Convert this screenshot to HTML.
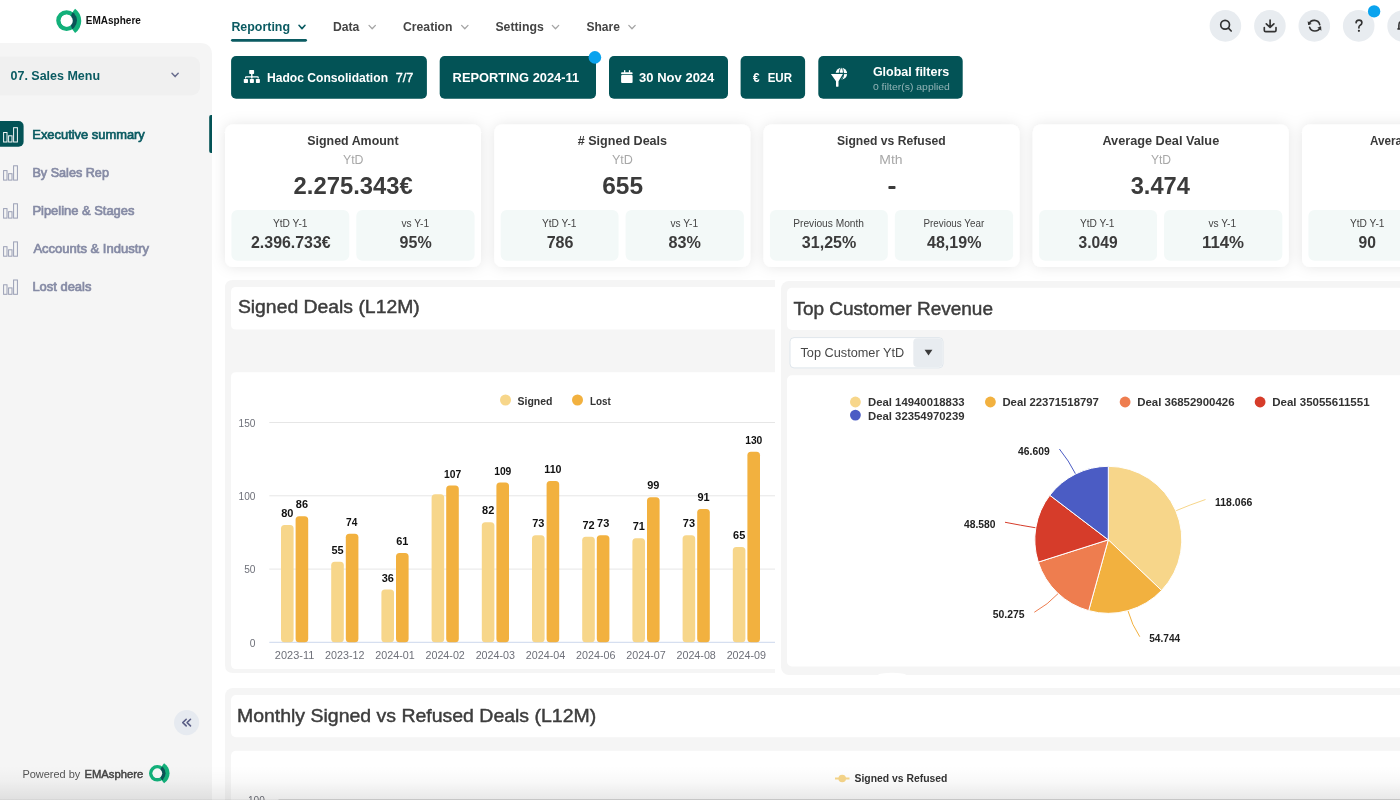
<!DOCTYPE html>
<html><head><meta charset="utf-8"><style>
html,body{margin:0;padding:0;background:#fff;overflow:hidden;width:1400px;height:800px}
svg{display:block;font-family:"Liberation Sans",sans-serif;will-change:transform}
</style></head><body>
<svg width="1400" height="800" viewBox="0 0 1400 800">
<defs>
  <filter id="sh" x="-20%" y="-40%" width="140%" height="180%" filterUnits="objectBoundingBox">
    <feDropShadow dx="0" dy="0" stdDeviation="7" flood-color="#000" flood-opacity="0.1"/>
  </filter>
  <linearGradient id="btm" x1="0" y1="0" x2="0" y2="1">
    <stop offset="0" stop-color="#000" stop-opacity="0"/>
    <stop offset="0.45" stop-color="#000" stop-opacity="0.025"/>
    <stop offset="1" stop-color="#000" stop-opacity="0.09"/>
  </linearGradient>
  <clipPath id="ringclip"><circle cx="66.6" cy="20.6" r="10.4"/></clipPath>
  <clipPath id="ringclip2"><circle cx="157.3" cy="773.3" r="8.3"/></clipPath>
</defs>
<!-- sidebar -->
<path d="M0,43 H200 Q212,43 212,55 V800 H0 Z" fill="#f5f5f5"/>
<rect x="-10" y="56.8" width="210" height="38.4" rx="8" fill="#f0f0f0"/>
<!-- logo top -->
<g>
  <circle cx="66.6" cy="20.6" r="8.2" fill="none" stroke="#12b07a" stroke-width="4.4"/>
  <path d="M75.1,8.8 A15,15 0 0 1 75.1,33 A17.7,17.7 0 0 1 75.1,8.8 Z" fill="#12b07a"/>
  <path d="M75.1,8.8 A15,15 0 0 1 75.1,33 A17.7,17.7 0 0 1 75.1,8.8 Z" fill="#0b5557" clip-path="url(#ringclip)"/>
  <circle cx="66.8" cy="20.8" r="6" fill="#fff"/>
</g>
<!-- logo bottom -->
<g>
  <circle cx="157.3" cy="773.3" r="6.55" fill="none" stroke="#12b07a" stroke-width="3.5"/>
  <path d="M164.1,763.2 A12,12 0 0 1 164.1,783.3 A14.5,14.5 0 0 1 164.1,763.2 Z" fill="#12b07a"/>
  <path d="M164.1,763.2 A12,12 0 0 1 164.1,783.3 A14.5,14.5 0 0 1 164.1,763.2 Z" fill="#0b5557" clip-path="url(#ringclip2)"/>
  <circle cx="157.4" cy="773.3" r="4.8" fill="#f7f7f7"/>
</g>
<!-- sales menu chevron -->
<path d="M172,73.2 L175.1,76.6 L178.2,73.2" fill="none" stroke="#6b6f8f" stroke-width="1.5" stroke-linecap="round" stroke-linejoin="round"/>
<!-- active item -->
<rect x="-6" y="121.1" width="29.6" height="25.6" rx="5" fill="#035356"/>
<path d="M212,115 V153 H211 Q209.2,153 209.2,151 V117 Q209.2,115 211,115 Z" fill="#035356"/>
<g fill="none" stroke="#fff" stroke-width="1" opacity="0.95">
  <rect x="3.6" y="132.5" width="3.4" height="9.5"/>
  <rect x="8.6" y="135.8" width="3.4" height="6.2"/>
  <rect x="13.6" y="127.7" width="3.8" height="14.3"/>
</g>
<g fill="none" stroke="#9a9fb5" stroke-width="1">
  <rect x="3.6" y="170.6" width="3.4" height="9.5"/>
  <rect x="8.6" y="173.7" width="3.4" height="6.4"/>
  <rect x="13.6" y="165.8" width="3.8" height="14.3"/>
  <rect x="3.6" y="208.6" width="3.4" height="9.5"/>
  <rect x="8.6" y="211.7" width="3.4" height="6.4"/>
  <rect x="13.6" y="203.8" width="3.8" height="14.3"/>
  <rect x="3.6" y="246.7" width="3.4" height="9.5"/>
  <rect x="8.6" y="249.8" width="3.4" height="6.4"/>
  <rect x="13.6" y="241.9" width="3.8" height="14.3"/>
  <rect x="3.6" y="284.8" width="3.4" height="9.5"/>
  <rect x="8.6" y="287.9" width="3.4" height="6.4"/>
  <rect x="13.6" y="280" width="3.8" height="14.3"/>
</g>
<!-- collapse -->
<circle cx="186.6" cy="722.6" r="12.6" fill="#e6eaf0"/>
<path d="M186.2,719.3 L182.8,722.6 L186.2,725.9 M190.5,719.3 L187.1,722.6 L190.5,725.9" fill="none" stroke="#5b5f86" stroke-width="1.6" stroke-linecap="round" stroke-linejoin="round"/>

<!-- top nav -->
<rect x="231" y="38.9" width="76" height="2.9" rx="1.45" fill="#0b5b62"/>
<path d="M299,25.3 L302,28.6 L305,25.3" fill="none" stroke="#0b5b62" stroke-width="1.6" stroke-linecap="round" stroke-linejoin="round"/>
<g fill="none" stroke="#a5a5a5" stroke-width="1.3" stroke-linecap="round" stroke-linejoin="round">
<path d="M369,25.4 L372.2,28.8 L375.4,25.4"/>
<path d="M461.6,25.4 L464.8,28.8 L468,25.4"/>
<path d="M552.3,25.4 L555.5,28.8 L558.7,25.4"/>
<path d="M628.8,25.4 L632,28.8 L635.2,25.4"/>
</g>

<!-- buttons -->
<g fill="#035356">
<rect x="231.1" y="56.1" width="195.8" height="42.6" rx="5"/>
<rect x="439.7" y="56.1" width="156.3" height="42.6" rx="5"/>
<rect x="609" y="56.1" width="119" height="42.6" rx="5"/>
<rect x="740.6" y="56.1" width="64.5" height="42.6" rx="5"/>
<rect x="818.3" y="56.1" width="144.4" height="42.6" rx="5"/>
</g>
<circle cx="594.9" cy="57.4" r="6.3" fill="#0aa3ee"/>
<!-- sitemap icon -->
<g fill="#fff">
<rect x="249.2" y="70.1" width="4.9" height="3.9" rx="0.7"/>
<rect x="251.1" y="73.5" width="1.4" height="3.5"/>
<path d="M245,78.4 V77.5 Q245,76.2 246.3,76.2 H257.5 Q258.8,76.2 258.8,77.5 V78.4 H257.6 V77.6 H246.2 V78.4 Z"/>
<rect x="251.1" y="76.5" width="1.4" height="2"/>
<rect x="243.8" y="78.9" width="4.2" height="4.1" rx="0.7"/>
<rect x="249.9" y="78.9" width="4" height="4.1" rx="0.7"/>
<rect x="255.9" y="78.9" width="4" height="4.1" rx="0.7"/>
</g>
<!-- calendar icon -->
<g fill="#fff">
<rect x="621.1" y="72.2" width="11.5" height="2" rx="0.8"/>
<rect x="621.1" y="75.1" width="11.5" height="7.9" rx="1"/>
<rect x="624" y="70.2" width="1.3" height="2.5"/>
<rect x="628.9" y="70.2" width="1.3" height="2.5"/>
</g>
<!-- funnel globe -->
<g>
<circle cx="841.4" cy="73.6" r="5.8" fill="#fff"/>
<ellipse cx="841.4" cy="73.6" rx="2.1" ry="5.8" fill="none" stroke="#035356" stroke-width="0.9"/>
<line x1="835" y1="73.6" x2="848" y2="73.6" stroke="#035356" stroke-width="1"/>
<path d="M830.9,74.1 H842.9 L838.5,81.2 V86.7 H836 V81.2 Z" fill="#035356" stroke="#035356" stroke-width="2.6" stroke-linejoin="round"/>
<path d="M830.9,74.1 H842.9 L838.5,81.2 V86.3 Q838.5,86.7 838.1,86.7 H836.4 Q836,86.7 836,86.3 V81.2 Z" fill="#fff"/>
</g>

<!-- right icons -->
<g fill="#e8ecf0">
<circle cx="1225.4" cy="25.9" r="15.8"/>
<circle cx="1269.9" cy="25.9" r="15.8"/>
<circle cx="1314.3" cy="25.9" r="15.8"/>
<circle cx="1358.7" cy="25.9" r="15.8"/>
<circle cx="1403.1" cy="25.9" r="15.8"/>
</g>
<g fill="none" stroke="#333" stroke-width="1.65" stroke-linecap="round" stroke-linejoin="round">
<circle cx="1225.1" cy="24.75" r="4.4"/>
<path d="M1228.4,28.1 L1231.2,31"/>
<path d="M1270.1,20 V27.2 M1266.3,23.8 L1270.1,27.4 L1273.9,23.8"/>
<path d="M1264.3,27.5 V30.2 Q1264.3,31.6 1265.7,31.6 H1274.6 Q1276,31.6 1276,30.2 V27.5"/>
<path d="M1309,24 A5.6,5.6 0 0 1 1319.7,24.6"/>
<path d="M1309.6,27.3 A5.6,5.6 0 0 0 1320.2,27.2"/>
<path d="M1356.1,22.8 Q1356.1,20.1 1359,20.1 Q1361.9,20.1 1361.9,22.7 Q1361.9,24.4 1359.9,25.4 Q1358.9,26 1358.9,27.6 V28"/>
</g>
<path d="M1307.7,21.2 L1308.1,25 L1311.7,24.1 Z" fill="#333"/>
<path d="M1321.4,30.7 L1321.1,26.6 L1317.4,27.6 Z" fill="#333"/>
<circle cx="1358.9" cy="30.8" r="1.1" fill="#333"/>
<circle cx="1374.1" cy="11.4" r="6.2" fill="#0aa3ee"/>
<path d="M1400.5,21.6 Q1398.9,22.4 1398.9,25.2 V28 L1398,29 H1401" fill="none" stroke="#333" stroke-width="1.6" stroke-linejoin="round"/>

<!-- KPI cards -->
<g filter="url(#sh)" fill="#fff">
<rect x="225.00" y="124.5" width="256" height="142.5" rx="8"/>
<rect x="494.25" y="124.5" width="256" height="142.5" rx="8"/>
<rect x="763.50" y="124.5" width="256" height="142.5" rx="8"/>
<rect x="1032.75" y="124.5" width="256" height="142.5" rx="8"/>
<rect x="1302.00" y="124.5" width="256" height="142.5" rx="8"/>
</g>
<g fill="#f3f9f8">
<rect x="231.40" y="210" width="117.9" height="50.7" rx="6"/>
<rect x="356.30" y="210" width="118.3" height="50.7" rx="6"/>
<rect x="500.65" y="210" width="117.9" height="50.7" rx="6"/>
<rect x="625.55" y="210" width="118.3" height="50.7" rx="6"/>
<rect x="769.90" y="210" width="117.9" height="50.7" rx="6"/>
<rect x="894.80" y="210" width="118.3" height="50.7" rx="6"/>
<rect x="1039.15" y="210" width="117.9" height="50.7" rx="6"/>
<rect x="1164.05" y="210" width="118.3" height="50.7" rx="6"/>
<rect x="1308.40" y="210" width="117.9" height="50.7" rx="6"/>
<rect x="1433.30" y="210" width="118.3" height="50.7" rx="6"/>
</g>
<rect x="888.4" y="185.9" width="7.1" height="3.1" rx="0.8" fill="#3b3b3b"/>

<!-- panels -->
<path d="M233,280 H775 V673 H233 Q225,673 225,665 V288 Q225,280 233,280 Z" fill="#f5f5f5"/>
<path d="M236,287 H775 V329.5 H236 Q231,329.5 231,324.5 V292 Q231,287 236,287 Z" fill="#fff"/>
<path d="M236,372.3 H775 V669 H236 Q231,669 231,664 V377.3 Q231,372.3 236,372.3 Z" fill="#fff"/>
<rect x="781" y="281" width="700" height="394" rx="8" fill="#f5f5f5"/>
<rect x="787" y="287.7" width="700" height="42.3" rx="5" fill="#fff"/>
<rect x="787" y="375.2" width="700" height="291.3" rx="5" fill="#fff"/>
<ellipse cx="892" cy="675" rx="14" ry="2.2" fill="#fff"/>
<rect x="790" y="337.6" width="153" height="30.3" rx="4" fill="#fff" stroke="#dfe6ec" stroke-width="1"/>
<rect x="913.3" y="338.3" width="29.3" height="28.8" rx="4" fill="#e8ecf0"/>
<path d="M924.6,349.8 H932.4 L928.5,355.6 Z" fill="#3a3a3a"/>
<rect x="225" y="688" width="1200" height="200" rx="8" fill="#f5f5f5"/>
<rect x="231" y="695" width="1200" height="42.3" rx="5" fill="#fff"/>
<rect x="231" y="750.7" width="1200" height="100" rx="5" fill="#fff"/>
<line x1="278.5" y1="799.5" x2="1400" y2="799.5" stroke="#e3e3e3" stroke-width="1"/>

<!-- bar chart grid -->
<g stroke="#e6e6e6" stroke-width="1">
<line x1="269.3" y1="422.5" x2="775" y2="422.5"/>
<line x1="269.3" y1="495.8" x2="775" y2="495.8"/>
<line x1="269.3" y1="569.1" x2="775" y2="569.1"/>
</g>
<line x1="269.3" y1="642.3" x2="775" y2="642.3" stroke="#d6dff0" stroke-width="1.2"/>
<circle cx="505.5" cy="400" r="5.5" fill="#f7d68a"/>
<circle cx="577.5" cy="400" r="5.5" fill="#f2b13f"/>
<circle cx="855.4" cy="402" r="5.4" fill="#f7d68a"/>
<circle cx="990.4" cy="402" r="5.4" fill="#f2b13f"/>
<circle cx="1125.1" cy="402" r="5.4" fill="#ee7d4f"/>
<circle cx="1260.1" cy="402" r="5.4" fill="#d63c2a"/>
<circle cx="855.4" cy="415.1" r="5.4" fill="#4b5cc4"/>
<line x1="835" y1="778.5" x2="849.5" y2="778.5" stroke="#f7d68a" stroke-width="2"/>
<circle cx="842.2" cy="778.5" r="3.8" fill="#f7d68a"/>
<!-- pie label lines -->
<g fill="none" stroke-width="1">
<path d="M1175.8,510.8 Q1189.6,504.9 1205.5,499.5" stroke="#f7d68a"/>
<path d="M1127.9,610.6 Q1131.9,625.1 1139.75,636.7" stroke="#f2b13f"/>
<path d="M1058.2,593.5 Q1048,604.5 1034.3,612.25" stroke="#ee7d4f"/>
<path d="M1035.8,527.8 Q1021,525.4 1005,522.25" stroke="#d63c2a"/>
<path d="M1075.6,474 Q1068.9,460.6 1059.4,449" stroke="#4b5cc4"/>
</g>

<rect x="281.00" y="525.07" width="12.6" height="117.23" rx="3.5" fill="#f7d68a"/><rect x="295.60" y="516.28" width="12.6" height="126.02" rx="3.5" fill="#f2b13f"/><rect x="331.20" y="561.71" width="12.6" height="80.59" rx="3.5" fill="#f7d68a"/><rect x="345.80" y="533.87" width="12.6" height="108.43" rx="3.5" fill="#f2b13f"/><rect x="381.40" y="589.55" width="12.6" height="52.75" rx="3.5" fill="#f7d68a"/><rect x="396.00" y="552.91" width="12.6" height="89.39" rx="3.5" fill="#f2b13f"/><rect x="431.60" y="494.30" width="12.6" height="148.00" rx="3.5" fill="#f7d68a"/><rect x="446.20" y="485.51" width="12.6" height="156.79" rx="3.5" fill="#f2b13f"/><rect x="481.80" y="522.14" width="12.6" height="120.16" rx="3.5" fill="#f7d68a"/><rect x="496.40" y="482.58" width="12.6" height="159.72" rx="3.5" fill="#f2b13f"/><rect x="532.00" y="535.33" width="12.6" height="106.97" rx="3.5" fill="#f7d68a"/><rect x="546.60" y="481.11" width="12.6" height="161.19" rx="3.5" fill="#f2b13f"/><rect x="582.20" y="536.80" width="12.6" height="105.50" rx="3.5" fill="#f7d68a"/><rect x="596.80" y="535.33" width="12.6" height="106.97" rx="3.5" fill="#f2b13f"/><rect x="632.40" y="538.26" width="12.6" height="104.04" rx="3.5" fill="#f7d68a"/><rect x="647.00" y="497.23" width="12.6" height="145.07" rx="3.5" fill="#f2b13f"/><rect x="682.60" y="535.33" width="12.6" height="106.97" rx="3.5" fill="#f7d68a"/><rect x="697.20" y="508.95" width="12.6" height="133.35" rx="3.5" fill="#f2b13f"/><rect x="732.80" y="547.05" width="12.6" height="95.25" rx="3.5" fill="#f7d68a"/><rect x="747.40" y="451.81" width="12.6" height="190.49" rx="3.5" fill="#f2b13f"/>
<path d="M1108.3,539.8 L1108.30,466.30 A73.5,73.5 0 0 1 1161.58,590.44 Z" fill="#f7d68a" stroke="#fff" stroke-width="1" stroke-linejoin="round"/><path d="M1108.3,539.8 L1161.58,590.44 A73.5,73.5 0 0 1 1088.70,610.64 Z" fill="#f2b13f" stroke="#fff" stroke-width="1" stroke-linejoin="round"/><path d="M1108.3,539.8 L1088.70,610.64 A73.5,73.5 0 0 1 1038.27,562.11 Z" fill="#ee7d4f" stroke="#fff" stroke-width="1" stroke-linejoin="round"/><path d="M1108.3,539.8 L1038.27,562.11 A73.5,73.5 0 0 1 1049.82,495.28 Z" fill="#d63c2a" stroke="#fff" stroke-width="1" stroke-linejoin="round"/><path d="M1108.3,539.8 L1049.82,495.28 A73.5,73.5 0 0 1 1108.30,466.30 Z" fill="#4b5cc4" stroke="#fff" stroke-width="1" stroke-linejoin="round"/>
<text x="85.80" y="23.60" font-size="10.6" font-weight="bold" fill="#111" textLength="55.10" lengthAdjust="spacingAndGlyphs" >EMAsphere</text>
<text x="10.50" y="80.00" font-size="13.2" font-weight="bold" fill="#0b5b62" textLength="89.55" lengthAdjust="spacingAndGlyphs" >07. Sales Menu</text>
<text x="32.32" y="138.50" font-size="13.2" font-weight="normal" fill="#0b5b62" textLength="112.48" lengthAdjust="spacingAndGlyphs" stroke="#0b5b62" stroke-width="0.7">Executive summary</text>
<text x="32.44" y="176.60" font-size="13.1" font-weight="normal" fill="#868ba5" textLength="76.49" lengthAdjust="spacingAndGlyphs" stroke="#868ba5" stroke-width="0.7">By Sales Rep</text>
<text x="32.41" y="214.60" font-size="13.1" font-weight="normal" fill="#868ba5" textLength="102.04" lengthAdjust="spacingAndGlyphs" stroke="#868ba5" stroke-width="0.7">Pipeline &amp; Stages</text>
<text x="33.40" y="252.75" font-size="13.1" font-weight="normal" fill="#868ba5" textLength="115.75" lengthAdjust="spacingAndGlyphs" stroke="#868ba5" stroke-width="0.7">Accounts &amp; Industry</text>
<text x="32.41" y="290.90" font-size="13.1" font-weight="normal" fill="#868ba5" textLength="58.99" lengthAdjust="spacingAndGlyphs" stroke="#868ba5" stroke-width="0.7">Lost deals</text>
<text x="22.40" y="778.40" font-size="10.6" font-weight="normal" fill="#555" textLength="57.92" lengthAdjust="spacingAndGlyphs" >Powered by</text>
<text x="84.50" y="778.40" font-size="10.8" font-weight="normal" fill="#444" textLength="58.70" lengthAdjust="spacingAndGlyphs" stroke="#444" stroke-width="0.45">EMAsphere</text>
<text x="231.40" y="31.10" font-size="13.1" font-weight="bold" fill="#0b5b62" textLength="58.60" lengthAdjust="spacingAndGlyphs" >Reporting</text>
<text x="332.90" y="31.10" font-size="13.1" font-weight="bold" fill="#444" textLength="26.43" lengthAdjust="spacingAndGlyphs" >Data</text>
<text x="403.00" y="31.10" font-size="13.1" font-weight="bold" fill="#444" textLength="49.50" lengthAdjust="spacingAndGlyphs" >Creation</text>
<text x="495.40" y="31.10" font-size="13.1" font-weight="bold" fill="#444" textLength="48.46" lengthAdjust="spacingAndGlyphs" >Settings</text>
<text x="586.40" y="31.10" font-size="13.1" font-weight="bold" fill="#444" textLength="33.46" lengthAdjust="spacingAndGlyphs" >Share</text>
<text x="266.90" y="81.90" font-size="13.4" font-weight="bold" fill="#fff" textLength="121.16" lengthAdjust="spacingAndGlyphs" >Hadoc Consolidation</text>
<text x="395.70" y="81.90" font-size="13.4" font-weight="normal" fill="#fff" textLength="17.62" lengthAdjust="spacingAndGlyphs" stroke="#fff" stroke-width="0.35">7/7</text>
<text x="452.60" y="82.10" font-size="13.4" font-weight="bold" fill="#fff" textLength="126.57" lengthAdjust="spacingAndGlyphs" >REPORTING 2024-11</text>
<text x="639.10" y="82.30" font-size="13.4" font-weight="bold" fill="#fff" textLength="75.26" lengthAdjust="spacingAndGlyphs" >30 Nov 2024</text>
<text x="752.90" y="82.30" font-size="13.4" font-weight="bold" fill="#fff" textLength="6.61" lengthAdjust="spacingAndGlyphs" >€</text>
<text x="767.70" y="82.30" font-size="13.4" font-weight="bold" fill="#fff" textLength="24.32" lengthAdjust="spacingAndGlyphs" >EUR</text>
<text x="872.90" y="75.70" font-size="12.2" font-weight="bold" fill="#fff" textLength="76.37" lengthAdjust="spacingAndGlyphs" >Global filters</text>
<text x="872.90" y="90.20" font-size="9.2" font-weight="normal" fill="#93b3b6" textLength="77.02" lengthAdjust="spacingAndGlyphs" >0 filter(s) applied</text>
<text x="307.30" y="144.60" font-size="13.2" font-weight="bold" fill="#3a3a3a" textLength="91.23" lengthAdjust="spacingAndGlyphs" >Signed Amount</text>
<text x="342.90" y="163.80" font-size="13.2" font-weight="normal" fill="#a8a8a8" textLength="20.59" lengthAdjust="spacingAndGlyphs" >YtD</text>
<text x="293.60" y="193.90" font-size="24.4" font-weight="bold" fill="#3b3b3b" textLength="119.27" lengthAdjust="spacingAndGlyphs" >2.275.343€</text>
<text x="272.90" y="227.00" font-size="10.6" font-weight="normal" fill="#444" textLength="34.60" lengthAdjust="spacingAndGlyphs" >YtD Y-1</text>
<text x="251.00" y="247.50" font-size="16.2" font-weight="bold" fill="#3b3b3b" textLength="79.70" lengthAdjust="spacingAndGlyphs" >2.396.733€</text>
<text x="401.40" y="227.00" font-size="10.6" font-weight="normal" fill="#444" textLength="27.70" lengthAdjust="spacingAndGlyphs" >vs Y-1</text>
<text x="399.60" y="247.50" font-size="16.2" font-weight="bold" fill="#3b3b3b" textLength="32.09" lengthAdjust="spacingAndGlyphs" >95%</text>
<text x="577.70" y="144.60" font-size="13.2" font-weight="bold" fill="#3a3a3a" textLength="89.42" lengthAdjust="spacingAndGlyphs" ># Signed Deals</text>
<text x="611.90" y="163.80" font-size="13.2" font-weight="normal" fill="#a8a8a8" textLength="21.00" lengthAdjust="spacingAndGlyphs" >YtD</text>
<text x="602.20" y="193.90" font-size="24.4" font-weight="bold" fill="#3b3b3b" textLength="40.87" lengthAdjust="spacingAndGlyphs" >655</text>
<text x="541.90" y="227.00" font-size="10.6" font-weight="normal" fill="#444" textLength="34.60" lengthAdjust="spacingAndGlyphs" >YtD Y-1</text>
<text x="546.70" y="247.50" font-size="16.2" font-weight="bold" fill="#3b3b3b" textLength="26.80" lengthAdjust="spacingAndGlyphs" >786</text>
<text x="670.40" y="227.00" font-size="10.6" font-weight="normal" fill="#444" textLength="27.70" lengthAdjust="spacingAndGlyphs" >vs Y-1</text>
<text x="668.60" y="247.50" font-size="16.2" font-weight="bold" fill="#3b3b3b" textLength="32.39" lengthAdjust="spacingAndGlyphs" >83%</text>
<text x="837.00" y="144.60" font-size="13.2" font-weight="bold" fill="#3a3a3a" textLength="108.55" lengthAdjust="spacingAndGlyphs" >Signed vs Refused</text>
<text x="879.34" y="163.80" font-size="13.2" font-weight="normal" fill="#a8a8a8" textLength="23.32" lengthAdjust="spacingAndGlyphs" >Mth</text>
<text x="793.20" y="227.00" font-size="10.6" font-weight="normal" fill="#444" textLength="70.80" lengthAdjust="spacingAndGlyphs" >Previous Month</text>
<text x="801.80" y="247.50" font-size="16.2" font-weight="bold" fill="#3b3b3b" textLength="54.49" lengthAdjust="spacingAndGlyphs" >31,25%</text>
<text x="923.50" y="227.00" font-size="10.6" font-weight="normal" fill="#444" textLength="60.66" lengthAdjust="spacingAndGlyphs" >Previous Year</text>
<text x="927.00" y="247.50" font-size="16.2" font-weight="bold" fill="#3b3b3b" textLength="54.39" lengthAdjust="spacingAndGlyphs" >48,19%</text>
<text x="1102.40" y="144.60" font-size="13.2" font-weight="bold" fill="#3a3a3a" textLength="116.82" lengthAdjust="spacingAndGlyphs" >Average Deal Value</text>
<text x="1150.90" y="163.80" font-size="13.2" font-weight="normal" fill="#a8a8a8" textLength="20.18" lengthAdjust="spacingAndGlyphs" >YtD</text>
<text x="1130.70" y="193.90" font-size="24.4" font-weight="bold" fill="#3b3b3b" textLength="59.18" lengthAdjust="spacingAndGlyphs" >3.474</text>
<text x="1079.90" y="227.00" font-size="10.6" font-weight="normal" fill="#444" textLength="34.60" lengthAdjust="spacingAndGlyphs" >YtD Y-1</text>
<text x="1078.60" y="247.50" font-size="16.2" font-weight="bold" fill="#3b3b3b" textLength="39.00" lengthAdjust="spacingAndGlyphs" >3.049</text>
<text x="1208.40" y="227.00" font-size="10.6" font-weight="normal" fill="#444" textLength="27.70" lengthAdjust="spacingAndGlyphs" >vs Y-1</text>
<text x="1201.96" y="247.50" font-size="16.2" font-weight="bold" fill="#3b3b3b" textLength="42.15" lengthAdjust="spacingAndGlyphs" >114%</text>
<text x="1370.00" y="144.60" font-size="13.2" font-weight="bold" fill="#3a3a3a" textLength="100.30" lengthAdjust="spacingAndGlyphs" >Average Deal Size</text>
<text x="1349.90" y="227.00" font-size="10.6" font-weight="normal" fill="#444" textLength="34.60" lengthAdjust="spacingAndGlyphs" >YtD Y-1</text>
<text x="1358.60" y="247.50" font-size="16.2" font-weight="bold" fill="#3b3b3b" textLength="17.40" lengthAdjust="spacingAndGlyphs" >90</text>
<text x="237.90" y="313.10" font-size="18.3" font-weight="normal" fill="#3d3d3d" textLength="181.85" lengthAdjust="spacingAndGlyphs" stroke="#3d3d3d" stroke-width="0.45">Signed Deals (L12M)</text>
<text x="793.40" y="314.70" font-size="18.3" font-weight="normal" fill="#3d3d3d" textLength="199.57" lengthAdjust="spacingAndGlyphs" stroke="#3d3d3d" stroke-width="0.45">Top Customer Revenue</text>
<text x="236.95" y="721.80" font-size="18.6" font-weight="normal" fill="#3d3d3d" textLength="359.25" lengthAdjust="spacingAndGlyphs" stroke="#3d3d3d" stroke-width="0.45">Monthly Signed vs Refused Deals (L12M)</text>
<text x="800.50" y="356.90" font-size="13.2" font-weight="normal" fill="#474747" textLength="103.70" lengthAdjust="spacingAndGlyphs" >Top Customer YtD</text>
<text x="517.50" y="404.50" font-size="11" font-weight="bold" fill="#333" textLength="34.99" lengthAdjust="spacingAndGlyphs" >Signed</text>
<text x="590.00" y="404.50" font-size="11" font-weight="bold" fill="#333" textLength="20.90" lengthAdjust="spacingAndGlyphs" >Lost</text>
<text x="868.00" y="406.40" font-size="11" font-weight="bold" fill="#333" textLength="96.52" lengthAdjust="spacingAndGlyphs" >Deal 14940018833</text>
<text x="1002.40" y="406.40" font-size="11" font-weight="bold" fill="#333" textLength="96.52" lengthAdjust="spacingAndGlyphs" >Deal 22371518797</text>
<text x="1137.20" y="406.40" font-size="11" font-weight="bold" fill="#333" textLength="97.32" lengthAdjust="spacingAndGlyphs" >Deal 36852900426</text>
<text x="1272.20" y="406.40" font-size="11" font-weight="bold" fill="#333" textLength="97.42" lengthAdjust="spacingAndGlyphs" >Deal 35055611551</text>
<text x="868.00" y="419.90" font-size="11" font-weight="bold" fill="#333" textLength="96.52" lengthAdjust="spacingAndGlyphs" >Deal 32354970239</text>
<text x="854.50" y="781.80" font-size="10.8" font-weight="bold" fill="#333" textLength="92.87" lengthAdjust="spacingAndGlyphs" >Signed vs Refused</text>
<text x="238.60" y="426.80" font-size="11" font-weight="normal" fill="#6e7079" textLength="16.91" lengthAdjust="spacingAndGlyphs" >150</text>
<text x="238.60" y="500.07" font-size="11" font-weight="normal" fill="#6e7079" textLength="16.91" lengthAdjust="spacingAndGlyphs" >100</text>
<text x="244.20" y="573.33" font-size="11" font-weight="normal" fill="#6e7079" textLength="11.31" lengthAdjust="spacingAndGlyphs" >50</text>
<text x="249.80" y="646.60" font-size="11" font-weight="normal" fill="#6e7079" textLength="5.71" lengthAdjust="spacingAndGlyphs" >0</text>
<text x="274.85" y="658.80" font-size="11" font-weight="normal" fill="#6e7079" textLength="39.42" lengthAdjust="spacingAndGlyphs" >2023-11</text>
<text x="325.05" y="658.80" font-size="11" font-weight="normal" fill="#6e7079" textLength="39.41" lengthAdjust="spacingAndGlyphs" >2023-12</text>
<text x="375.25" y="658.80" font-size="11" font-weight="normal" fill="#6e7079" textLength="39.41" lengthAdjust="spacingAndGlyphs" >2024-01</text>
<text x="425.45" y="658.80" font-size="11" font-weight="normal" fill="#6e7079" textLength="39.41" lengthAdjust="spacingAndGlyphs" >2024-02</text>
<text x="475.65" y="658.80" font-size="11" font-weight="normal" fill="#6e7079" textLength="39.41" lengthAdjust="spacingAndGlyphs" >2024-03</text>
<text x="525.85" y="658.80" font-size="11" font-weight="normal" fill="#6e7079" textLength="39.41" lengthAdjust="spacingAndGlyphs" >2024-04</text>
<text x="576.05" y="658.80" font-size="11" font-weight="normal" fill="#6e7079" textLength="39.41" lengthAdjust="spacingAndGlyphs" >2024-06</text>
<text x="626.25" y="658.80" font-size="11" font-weight="normal" fill="#6e7079" textLength="39.41" lengthAdjust="spacingAndGlyphs" >2024-07</text>
<text x="676.45" y="658.80" font-size="11" font-weight="normal" fill="#6e7079" textLength="39.41" lengthAdjust="spacingAndGlyphs" >2024-08</text>
<text x="726.65" y="658.80" font-size="11" font-weight="normal" fill="#6e7079" textLength="39.41" lengthAdjust="spacingAndGlyphs" >2024-09</text>
<text x="281.25" y="517.07" font-size="11" font-weight="bold" fill="#111" textLength="12.22" lengthAdjust="spacingAndGlyphs" >80</text>
<text x="295.85" y="508.28" font-size="11" font-weight="bold" fill="#111" textLength="12.22" lengthAdjust="spacingAndGlyphs" >86</text>
<text x="331.45" y="553.71" font-size="11" font-weight="bold" fill="#111" textLength="12.22" lengthAdjust="spacingAndGlyphs" >55</text>
<text x="346.05" y="525.87" font-size="11" font-weight="bold" fill="#111" textLength="11.29" lengthAdjust="spacingAndGlyphs" >74</text>
<text x="381.65" y="581.55" font-size="11" font-weight="bold" fill="#111" textLength="12.22" lengthAdjust="spacingAndGlyphs" >36</text>
<text x="396.25" y="544.91" font-size="11" font-weight="bold" fill="#111" textLength="12.22" lengthAdjust="spacingAndGlyphs" >61</text>
<text x="443.95" y="477.51" font-size="11" font-weight="bold" fill="#111" textLength="17.21" lengthAdjust="spacingAndGlyphs" >107</text>
<text x="482.05" y="514.14" font-size="11" font-weight="bold" fill="#111" textLength="12.22" lengthAdjust="spacingAndGlyphs" >82</text>
<text x="494.15" y="474.58" font-size="11" font-weight="bold" fill="#111" textLength="17.21" lengthAdjust="spacingAndGlyphs" >109</text>
<text x="532.25" y="527.33" font-size="11" font-weight="bold" fill="#111" textLength="12.22" lengthAdjust="spacingAndGlyphs" >73</text>
<text x="544.35" y="473.11" font-size="11" font-weight="bold" fill="#111" textLength="17.21" lengthAdjust="spacingAndGlyphs" >110</text>
<text x="582.45" y="528.80" font-size="11" font-weight="bold" fill="#111" textLength="12.22" lengthAdjust="spacingAndGlyphs" >72</text>
<text x="597.05" y="527.33" font-size="11" font-weight="bold" fill="#111" textLength="12.22" lengthAdjust="spacingAndGlyphs" >73</text>
<text x="632.65" y="530.26" font-size="11" font-weight="bold" fill="#111" textLength="12.22" lengthAdjust="spacingAndGlyphs" >71</text>
<text x="647.25" y="489.23" font-size="11" font-weight="bold" fill="#111" textLength="12.22" lengthAdjust="spacingAndGlyphs" >99</text>
<text x="682.85" y="527.33" font-size="11" font-weight="bold" fill="#111" textLength="12.22" lengthAdjust="spacingAndGlyphs" >73</text>
<text x="697.45" y="500.95" font-size="11" font-weight="bold" fill="#111" textLength="12.22" lengthAdjust="spacingAndGlyphs" >91</text>
<text x="733.05" y="539.05" font-size="11" font-weight="bold" fill="#111" textLength="12.22" lengthAdjust="spacingAndGlyphs" >65</text>
<text x="745.15" y="443.81" font-size="11" font-weight="bold" fill="#111" textLength="17.21" lengthAdjust="spacingAndGlyphs" >130</text>
<text x="1215.00" y="505.80" font-size="10.6" font-weight="bold" fill="#222" textLength="37.39" lengthAdjust="spacingAndGlyphs" >118.066</text>
<text x="1149.20" y="641.80" font-size="10.6" font-weight="bold" fill="#222" textLength="30.95" lengthAdjust="spacingAndGlyphs" >54.744</text>
<text x="992.75" y="617.50" font-size="10.6" font-weight="bold" fill="#222" textLength="31.84" lengthAdjust="spacingAndGlyphs" >50.275</text>
<text x="964.00" y="528.10" font-size="10.6" font-weight="bold" fill="#222" textLength="31.49" lengthAdjust="spacingAndGlyphs" >48.580</text>
<text x="1018.10" y="455.00" font-size="10.6" font-weight="bold" fill="#222" textLength="31.54" lengthAdjust="spacingAndGlyphs" >46.609</text>
<text x="247.90" y="804.30" font-size="11" font-weight="normal" fill="#6e7079" textLength="16.91" lengthAdjust="spacingAndGlyphs" >100</text>
<rect x="0" y="766" width="1400" height="34" fill="url(#btm)"/><rect x="0" y="799" width="1400" height="1" fill="#000" opacity="0.04"/>
</svg>
</body></html>
